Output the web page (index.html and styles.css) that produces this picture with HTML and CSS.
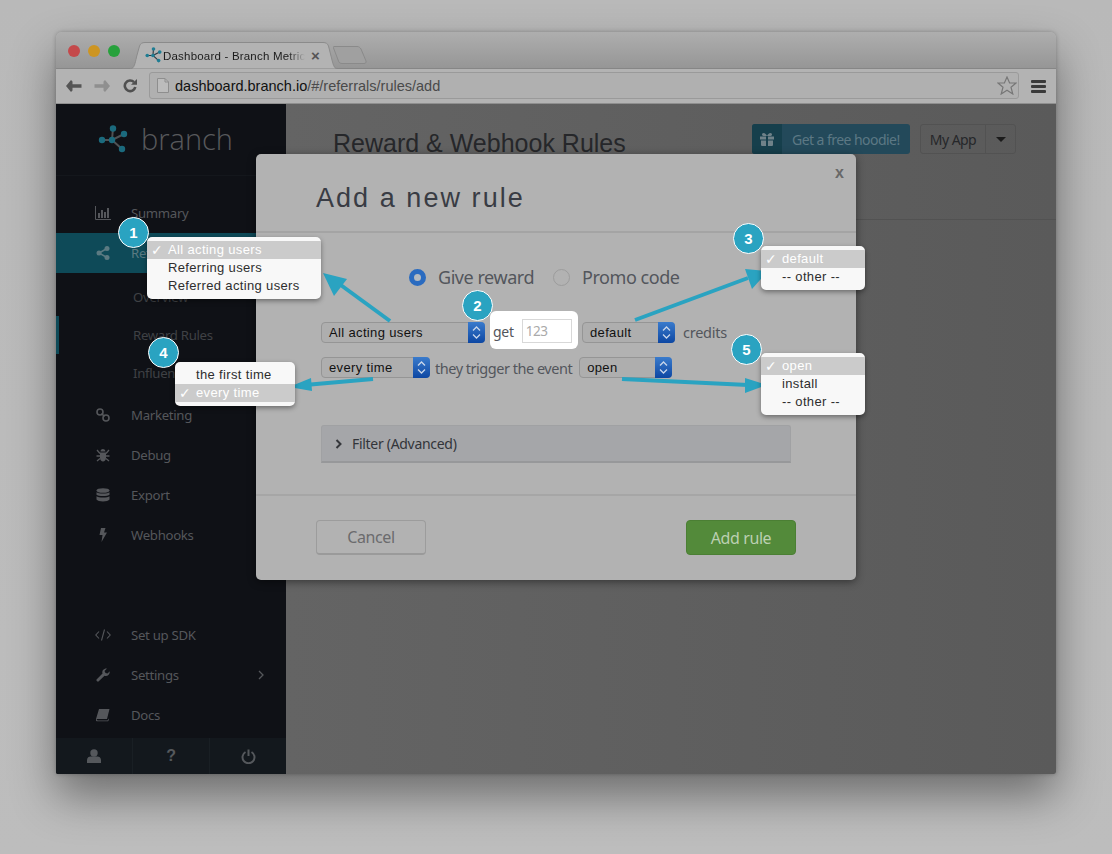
FILE: index.html
```html
<!DOCTYPE html>
<html lang="en">
<head>
<meta charset="utf-8">
<title>Add a new rule</title>
<link rel="stylesheet" href="styles.css">
</head>
<body>
<svg class="defs" width="0" height="0">
  <symbol id="branch-logo" viewBox="0 0 30 30">
    <g stroke="currentColor" stroke-width="2" fill="none"><path d="M4 15H14M15 3L14 15M26 9L14 15L24 24" /></g>
    <g class="node"><circle cx="4" cy="15" r="3.2"/><circle cx="14" cy="15" r="3.2"/><circle cx="15" cy="3.5" r="3.2"/><circle cx="26" cy="9" r="3.2"/><circle cx="24" cy="24" r="3.2"/></g>
  </symbol>
  <symbol id="updown" viewBox="0 0 17 21">
    <path d="M5 8.500L8.500 5L12 8.500M5 12.500L8.500 16L12 12.500" fill="none" stroke="#c9d6ea" stroke-width="1.300"/>
  </symbol>
</svg>
<div class="scene">
  <div class="window">
    <div class="titlebar">
      <div class="lights"><span class="light red"></span><span class="light amber"></span><span class="light green"></span></div>
      <div class="tab">
        <svg class="tab-shape" width="207" height="27" viewBox="0 0 207 27"><path d="M0 26.500H1C4 26.500 5 22 6.500 15L9.500 4C10.500 1.500 12 .5 15 .5H193C196 .5 197.500 1.500 198.500 4L202 18C203.500 24 204.500 26.500 207 26.500" fill="#b3b3b3" stroke="#8b8b8b"/></svg>
        <svg class="tab-logo" width="17" height="17"><use href="#branch-logo"/></svg>
        <span class="tab-title">Dashboard - Branch Metric</span>
        <span class="tab-close">×</span>
      </div>
      <svg class="newtab" width="34" height="18" viewBox="0 0 34 18"><path d="M1 .5H24C26 .5 27 1.500 28 3L33 15C33.500 16.500 32.500 17.500 31 17.500H9C7 17.500 6 16.500 5.500 15L.5 2C.3 1 .5 .5 1 .5Z" fill="#a0a0a0" stroke="#8a8a8a"/></svg>
    </div>
    <div class="toolbar">
      <svg class="tool" width="16" height="14" viewBox="0 0 16 14"><path d="M15.500 5.300H6.500V2.500L5 1L0 7L5 13L6.500 11.500V8.700H15.500Z" fill="#555"/></svg>
      <svg class="tool forward" width="16" height="14" viewBox="0 0 16 14"><path d="M.5 5.300H9.500V2.500L11 1L16 7L11 13L9.500 11.500V8.700H.5Z" fill="#8f8f8f"/></svg>
      <svg class="tool reload" width="14" height="14" viewBox="0 0 14 14"><path d="M11 3.200A5.300 5.300 0 1 0 12.300 8" fill="none" stroke="#505050" stroke-width="2.600"/><path d="M8 5.700H14V0Z" fill="#505050"/></svg>
      <div class="omnibox">
        <svg width="12" height="15" viewBox="0 0 12 15"><path d="M.5 .5H8L11.500 4V14.500H.5Z" fill="#bcbcbc" stroke="#8e8e8e"/><path d="M8 .5V4H11.500" fill="none" stroke="#8e8e8e"/></svg>
        <span class="url"><b>dashboard.branch.io</b>/#/referrals/rules/add</span>
        <svg class="star" width="20" height="19" viewBox="0 0 20 19"><path d="M10 1L12.600 7H19L14 11.200L15.800 18L10 14.200L4.200 18L6 11.200L1 7H7.400Z" fill="none" stroke="#777" stroke-width="1.200"/></svg>
      </div>
      <div class="burger"><i></i><i></i><i></i></div>
    </div>
    <div class="app">
      <aside class="sidebar">
        <div class="brand">
          <svg class="brand-logo" width="30" height="30"><use href="#branch-logo"/></svg>
          <span>branch</span>
        </div>
        <nav class="nav">
          <a class="item"><svg class="ico" width="16" height="14" viewBox="0 0 16 14"><path d="M.5 0V13.500H16" fill="none" stroke="currentColor"/><path d="M3 7h2v5H3zM6 4h2v8H6zM9 6h2v6H9zM12 2h2v10h-2z" fill="currentColor"/></svg>Summary</a>
          <a class="item active"><svg class="ico" width="14" height="14" viewBox="0 0 14 14"><path d="M11 2.500L3 7L11 11.500" fill="none" stroke="currentColor" stroke-width="1.500"/><circle cx="11" cy="2.500" r="2.500" fill="currentColor"/><circle cx="3" cy="7" r="2.500" fill="currentColor"/><circle cx="11" cy="11.500" r="2.500" fill="currentColor"/></svg>Referrals</a>
          <div class="sub">
            <a class="subitem">Overview</a>
            <a class="subitem current">Reward Rules</a>
            <a class="subitem">Influencers</a>
          </div>
          <a class="item"><svg class="ico" width="14" height="14" viewBox="0 0 14 14"><g fill="none" stroke="currentColor" stroke-width="1.600"><circle cx="4" cy="4" r="3"/><circle cx="10" cy="10" r="3"/><path d="M5.500 5.500L8.500 8.500"/></g></svg>Marketing</a>
          <a class="item"><svg class="ico" width="14" height="14" viewBox="0 0 14 14"><path d="M4.500 3.500A2.500 2.500 0 0 1 9.500 3.500ZM4 4.500H10V10C10 12 8.500 13.500 7 13.500S4 12 4 10Z" fill="currentColor"/><path d="M1 2L4 5.500M13 2L10 5.500M.5 8H4M10 8H13.500M1 13L4 10.500M13 13L10 10.500" stroke="currentColor" stroke-width="1.300"/></svg>Debug</a>
          <a class="item"><svg class="ico" width="14" height="14" viewBox="0 0 14 14"><g fill="currentColor"><ellipse cx="7" cy="2.500" rx="6.500" ry="2.300"/><path d="M.5 4.300C2 6 12 6 13.500 4.300V6.700C12 8.500 2 8.500 .5 6.700ZM.5 8.300C2 10 12 10 13.500 8.300V11.500C12 14 2 14 .5 11.500Z"/></g></svg>Export</a>
          <a class="item"><svg class="ico" width="8" height="14" viewBox="0 0 8 14"><path d="M2 0H6.500L5 4.500H8L2.500 14L3.500 7H0.500Z" fill="currentColor"/></svg>Webhooks</a>
          <div class="nav-bottom">
            <a class="item"><svg class="ico" width="16" height="12" viewBox="0 0 16 12"><path d="M4 2.500L.8 6L4 9.500M12 2.500L15.200 6L12 9.500M9.500 .5L6.500 11.500" fill="none" stroke="currentColor" stroke-width="1.100"/></svg>Set up SDK</a>
            <a class="item"><svg class="ico" width="14" height="14" viewBox="0 0 14 14"><path d="M.5 11.500L6.500 5.500C5.700 3 7.500 .3 11 .5L8.500 3L9.500 5L11.500 5.500L13.800 3.200C14 7 11 8.500 8.500 7.700L2.500 13.500C1.500 14 0 12.800 .5 11.500Z" fill="currentColor"/></svg>Settings<svg class="chev" width="6" height="10" viewBox="0 0 6 10"><path d="M1 1L5 5L1 9" fill="none" stroke="currentColor" stroke-width="1.300"/></svg></a>
            <a class="item"><svg class="ico" width="14" height="13" viewBox="0 0 14 13"><path d="M3 .5H13.500L11 10.500H1C.5 11 .8 12 2 12H11.500L13 10V11L12 13H1.500C0 13 -.3 11.500 0 10.500Z" fill="currentColor"/></svg>Docs</a>
          </div>
        </nav>
        <div class="sidefoot">
          <span><svg width="14" height="14" viewBox="0 0 14 14"><circle cx="7" cy="4" r="3.700" fill="currentColor"/><path d="M0 14V11C0 8.500 2 7.500 3.500 7.500H10.500C12 7.500 14 8.500 14 11V14Z" fill="currentColor"/></svg></span>
          <span class="q">?</span>
          <span><svg width="15" height="15" viewBox="0 0 15 15"><path d="M4.500 3A6 6 0 1 0 10.500 3" fill="none" stroke="currentColor" stroke-width="2"/><path d="M7.500 .5V7" stroke="currentColor" stroke-width="2"/></svg></span>
        </div>
      </aside>
      <main class="main">
        <header class="main-head">
          <h1>Reward &amp; Webhook Rules</h1>
          <div class="head-actions">
            <a class="hoodie"><span class="gift"><svg width="14" height="13" viewBox="0 0 14 13"><path d="M0 3.500H6V6.500H0ZM8 3.500H14V6.500H8ZM1 7.500H6V13H2.500C1.500 13 1 12.500 1 12ZM8 7.500H13V12C13 12.500 12.500 13 11.500 13H8ZM3.500 0C5 0 6.500 1.500 7 3C7.500 1.500 9 0 10.500 0C12.500 0 12.500 3 10.500 3H3.500C1.500 3 1.500 0 3.500 0Z" fill="#6f8289"/></svg></span><span class="hoodie-text">Get a free hoodie!</span></a>
            <div class="appswitch"><span class="appname">My App</span><span class="appcaret"></span></div>
          </div>
        </header>
      </main>
    </div>
  </div>

  <section class="modal">
    <header class="modal-head"><h2>Add a new rule</h2><span class="modal-x">x</span></header>
    <div class="modal-body">
      <div class="radios">
        <span class="radio on"></span><span class="radio-label">Give reward</span>
        <span class="radio"></span><span class="radio-label">Promo code</span>
      </div>
      <div class="form-row first">
        <div class="select w164"><span>All acting users</span><span class="stepper"><svg width="17" height="21"><use href="#updown"/></svg></span></div>
        <div class="spot"><span class="word">get</span><span class="input">123</span></div>
        <div class="select w93"><span>default</span><span class="stepper"><svg width="17" height="21"><use href="#updown"/></svg></span></div>
        <span class="word credits">credits</span>
      </div>
      <div class="form-row second">
        <div class="select w109"><span>every time</span><span class="stepper"><svg width="17" height="21"><use href="#updown"/></svg></span></div>
        <span class="word">they trigger the event</span>
        <div class="select w93 last"><span>open</span><span class="stepper"><svg width="17" height="21"><use href="#updown"/></svg></span></div>
      </div>
      <div class="filter"><svg width="8" height="10" viewBox="0 0 8 10"><path d="M1.500 1L5.500 5L1.500 9" fill="none" stroke="#35373b" stroke-width="2"/></svg>Filter (Advanced)</div>
    </div>
    <footer class="modal-foot"><a class="btn cancel">Cancel</a><a class="btn add">Add rule</a></footer>
  </section>

  <svg class="arrows" width="1112" height="854" viewBox="0 0 1112 854">
    <g fill="#2aa3c1" stroke="#2aa3c1">
      <path d="M390 321L338 283" stroke-width="4"/><path d="M323 273L347 279L334 296Z" stroke="none"/>
      <path d="M635 320L748 278" stroke-width="4"/><path d="M768 271L752 289L745 269Z" stroke="none"/>
      <path d="M373 379L305 385" stroke-width="4"/><path d="M289 387L311 378L312 391Z" stroke="none"/>
      <path d="M622 379L748 385" stroke-width="4"/><path d="M767 385L745 378L745 393Z" stroke="none"/>
    </g>
  </svg>

  <ul class="menu m1"><li class="sel">All acting users</li><li>Referring users</li><li>Referred acting users</li></ul>
  <ul class="menu m3"><li class="sel">default</li><li>-- other --</li></ul>
  <ul class="menu m4"><li>the first time</li><li class="sel">every time</li></ul>
  <ul class="menu m5"><li class="sel">open</li><li>install</li><li>-- other --</li></ul>

  <span class="badge b1">1</span>
  <span class="badge b2">2</span>
  <span class="badge b3">3</span>
  <span class="badge b4">4</span>
  <span class="badge b5">5</span>
</div>
</body>
</html>
```
FILE: styles.css
```css
* { box-sizing: border-box; }
html, body { margin: 0; padding: 0; }
body { background: #bababa; font-family: "Liberation Sans", Arial, sans-serif; overflow: hidden; }
.defs { position: absolute; }
.node { fill: var(--node, #1f7d93); }
.scene { position: relative; width: 1112px; height: 854px; padding: 32px 56px 0; background: linear-gradient(#b9b9b9, #bdbdbd); }

.window { width: 1000px; height: 742px; display: flex; flex-direction: column; border-radius: 6px 6px 2px 2px; box-shadow: 0 22px 45px rgba(0,0,0,.42), 0 0 4px rgba(0,0,0,.25); overflow: hidden; }
.titlebar { height: 37px; flex: none; display: flex; align-items: flex-end; background: linear-gradient(#aeaeae, #969696); border-bottom: 1px solid #868686; position: relative; padding-left: 12px; }
.lights { display: flex; gap: 8px; align-self: flex-start; margin-top: 13px; }
.light { width: 12px; height: 12px; border-radius: 50%; }
.red { background: #c4494b; } .amber { background: #cd9522; } .green { background: #27a13c; }
.tab { position: relative; width: 207px; height: 27px; margin: 0 0 -1px 10px; display: flex; align-items: center; padding: 0 17px 0 15px; font-size: 11.500px; letter-spacing: .2px; color: #1c1c1c; }
.tab-shape { position: absolute; left: 0; top: 0; }
.tab-logo { position: relative; flex: none; color: #2c3a42; margin-right: 1px; }
.tab-title { position: relative; flex: none; white-space: nowrap; -webkit-mask-image: linear-gradient(90deg, #000 88%, transparent); mask-image: linear-gradient(90deg, #000 88%, transparent); }
.tab-close { position: relative; margin-left: auto; font-size: 15px; font-weight: 700; color: #555; }
.newtab { margin: 0 0 4px -4px; position: relative; }
.toolbar { height: 35px; flex: none; display: flex; align-items: center; padding: 0 10px 0 10px; background: #b3b3b3; border-bottom: 1px solid #8f8f8f; }
.tool { flex: none; }
.forward { margin-left: 12px; }
.reload { margin-left: 13px; margin-right: 12px; }
.omnibox { width: 871px; height: 27px; display: flex; align-items: center; padding: 0 1px 0 7px; background: #b0b0b0; border: 1px solid #9a9a9a; border-radius: 3px; margin-top: -1px; }
.url { margin-left: 6px; flex: 1; font-size: 14.500px; color: #4a4a4a; white-space: nowrap; }
.url b { font-weight: 400; color: #111; }
.burger { margin-left: 12px; width: 15px; display: flex; flex-direction: column; gap: 2px; }
.burger i { display: block; height: 3px; background: #3a3a3a; border-radius: 1px; }

.app { flex: 1; display: flex; min-height: 0; }
.sidebar { width: 230px; flex: none; display: flex; flex-direction: column; background: #0f1116; color: #55575b; font-family: "Noto Sans", sans-serif; font-size: 13.200px; letter-spacing: -.3px; }
.brand { height: 72px; flex: none; display: flex; align-items: center; padding: 0 0 0 42px; border-bottom: 1px solid #14171c; font-size: 29px; font-weight: 300; letter-spacing: 0; color: #58595c; font-family: "Open Sans", sans-serif; }
.brand span { margin-left: 13px; margin-top: -2px; }
.brand-logo { color: #4e5154; --node: #1b6a7d; }
.nav { flex: 1; display: flex; flex-direction: column; padding-top: 17px; }
.item { height: 40px; flex: none; display: flex; align-items: center; position: relative; padding-left: 75px; }
.ico { position: absolute; left: 47px; top: 50%; transform: translate(-50%, -50%); }
.item.active { background: #0e4a58; color: #5b7a82; }
.sub { padding: 5px 0 3px; }
.subitem { height: 38px; display: flex; align-items: center; padding-left: 77px; color: #3f4145; }
.current { box-shadow: inset 3px 0 0 #0e4a58; }
.nav-bottom { margin-top: auto; margin-bottom: 3px; }
.chev { position: absolute; left: 202px; top: 15px; }
.sidefoot { height: 36px; flex: none; display: flex; background: #13181d; color: #55585c; }
.sidefoot span { flex: 1; display: flex; align-items: center; justify-content: center; border-left: 1px solid #191f24; }
.sidefoot span:first-child { border-left: 0; }
.q { font: 700 16px "Liberation Sans", sans-serif; }

.main { flex: 1; background: linear-gradient(90deg, #646464, #5a5a5a); }
.main-head { height: 116px; display: flex; justify-content: space-between; padding: 20px 40px 0 47px; border-bottom: 1px solid #525252; }
.main-head h1 { margin: 4px 0 0; font-size: 25px; line-height: 30px; font-weight: 400; color: #26272a; }
.head-actions { display: flex; gap: 10px; height: 30px; font-family: "Noto Sans", sans-serif; font-size: 14px; }
.hoodie { width: 158px; display: flex; align-items: center; background: #23495a; border-radius: 3px; color: #5c7884; overflow: hidden; letter-spacing: -.55px; }
.gift { width: 30px; height: 100%; display: flex; align-items: center; justify-content: center; background: #163f4c; }
.hoodie-text { margin-left: 10px; white-space: nowrap; }
.appswitch { width: 96px; display: flex; border: 1px solid #525252; border-radius: 3px; color: #26272a; letter-spacing: -.55px; }
.appname { width: 65px; display: flex; align-items: center; justify-content: center; border-right: 1px solid #525252; }
.appcaret { flex: 1; position: relative; }
.appcaret::after { content: ""; position: absolute; left: 50%; top: 12px; margin-left: -5px; border: 5px solid transparent; border-top-color: #1b1b1b; border-bottom: 0; }

.modal { position: absolute; left: 256px; top: 154px; width: 600px; height: 426px; background: #b2b2b2; border-radius: 5px; box-shadow: 0 2px 8px rgba(0,0,0,.45); display: flex; flex-direction: column; }
.modal-head { height: 79px; flex: none; padding: 28px 60px 0; border-bottom: 2px solid #a4a4a4; position: relative; }
.modal-head h2 { margin: 0; font-size: 27px; line-height: 32px; font-weight: 400; letter-spacing: 2.050px; color: #393c44; }
.modal-x { position: absolute; right: 12px; top: 10px; font-size: 16px; font-weight: 700; color: #686868; }
.modal-body { flex: 1; padding: 32px 0 0 65px; font-family: "Noto Sans", sans-serif; }
.radios { display: flex; align-items: center; height: 24px; padding-left: 88px; font-size: 18px; letter-spacing: -.45px; color: #53565c; }
.radio { width: 17px; height: 17px; border-radius: 50%; border: 1px solid #9c9c9c; flex: none; }
.radio.on { background: #b4bac0; border: 5px solid #2a6bc0; }
.radio-label { margin: 0 19px 0 12px; white-space: nowrap; }
.form-row { display: flex; align-items: center; }
.first { height: 38px; margin-top: 22px; }
.second { height: 21px; margin-top: 8px; }
.select { height: 21px; flex: none; display: flex; align-items: center; padding-left: 7px; background: #aeaeae; border: 1px solid #959595; border-radius: 4px; font: 13px "Liberation Sans", sans-serif; letter-spacing: .35px; color: #111; }
.first .select { align-self: flex-start; margin-top: 11px; }
.stepper { margin-left: auto; margin-right: -1px; width: 17px; height: 21px; flex: none; display: flex; border-radius: 0 4px 4px 0; background: linear-gradient(#3a7bcc, #0d47a3); }
.w164 { width: 164px; } .w93 { width: 93px; } .w109 { width: 109px; }
.spot { width: 88px; height: 38px; margin: 0 4px 0 5px; flex: none; display: flex; align-items: center; padding: 2px 0 0 3px; background: #fff; border-radius: 6px; }
.word { font-size: 14.500px; letter-spacing: -.25px; color: #53565c; white-space: nowrap; }
.spot .word { font-size: 14px; }
.second .word { margin-left: 5px; letter-spacing: -.48px; }
.last { margin-left: 7px; }
.first .credits { margin: 4px 0 0 8px; }
.input { width: 50px; height: 24px; margin-left: 8px; display: flex; align-items: center; padding-left: 3px; border: 1px solid #d8d8d8; font-size: 13.500px; letter-spacing: -.5px; color: #aaa; }
.filter { width: 470px; height: 38px; margin-top: 47px; display: flex; align-items: center; gap: 9px; padding-left: 13px; background: #a5a6a9; border: 1px solid #a0a1a3; border-bottom: 2px solid #97989a; border-radius: 3px 3px 0 0; font-size: 14px; letter-spacing: -.3px; color: #33353a; }
.modal-foot { height: 86px; flex: none; display: flex; justify-content: space-between; padding: 24px 60px 0; border-top: 2px solid #a6a6a6; font-family: "Noto Sans", sans-serif; }
.btn { width: 110px; height: 35px; display: flex; align-items: center; justify-content: center; border-radius: 4px; font-size: 16px; letter-spacing: -.4px; }
.cancel { border: 1px solid #9c9c9c; border-bottom: 2px solid #9a9a9a; color: #6b6b6d; }
.add { background: #538a3a; border: 1px solid #4b7f34; color: #bcd0b2; }

.arrows { position: absolute; left: 0; top: 0; pointer-events: none; }
.menu { position: absolute; margin: 0; padding: 4px 0; list-style: none; background: #f8f8f8; border-radius: 5px; box-shadow: 0 2px 5px rgba(0,0,0,.4); font-size: 13px; letter-spacing: .35px; color: #2e2e2e; }
.menu li { height: 18px; line-height: 18px; padding-left: 21px; white-space: nowrap; position: relative; }
.menu .sel { background: #cbcbcb; color: #fff; }
.menu .sel::before { content: "✓"; position: absolute; left: 4px; font-family: "DejaVu Sans", sans-serif; font-size: 14px; font-weight: 700; color: #fff; }
.m1 { left: 147px; top: 237px; width: 174px; }
.m3 { left: 761px; top: 246px; width: 104px; }
.m4 { left: 175px; top: 362px; width: 120px; }
.m5 { left: 761px; top: 353px; width: 104px; }
.badge { position: absolute; width: 31px; height: 31px; display: flex; align-items: center; justify-content: center; background: #2aa3c1; border: 1.500px solid #fff; border-radius: 50%; color: #fff; font-size: 15px; font-weight: 700; }
.b1 { left: 118px; top: 217px; }
.b2 { left: 462px; top: 290px; }
.b3 { left: 733px; top: 223px; }
.b4 { left: 148px; top: 337px; }
.b5 { left: 731px; top: 334px; }
```
